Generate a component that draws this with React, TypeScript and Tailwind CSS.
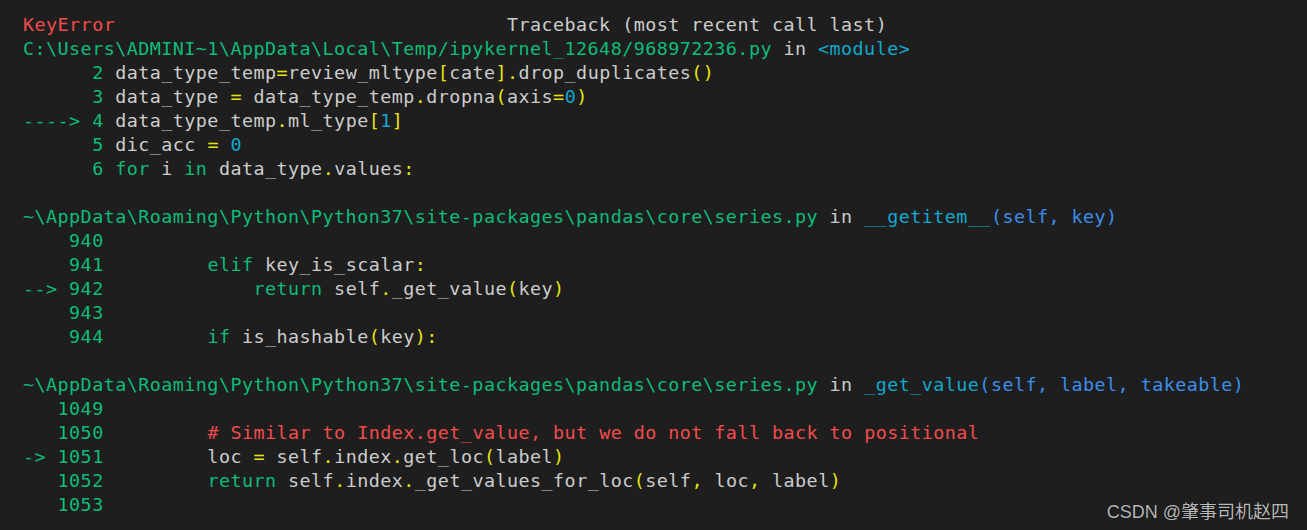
type Seg = [string, string];

const G = 'text-[#0dbc79]';
const W = 'text-[#cccccc]';
const Y = 'text-[#e5e510]';
const C = 'text-[#11a8cd]';
const B = 'text-[#3b8eea]';
const R = 'text-[#f14c4c]';

const IND = '        ';

const lines: Seg[][] = [
  [[R, 'KeyError'], [W, ' '.repeat(34) + 'Traceback (most recent call last)']],
  [[G, 'C:\\Users\\ADMINI~1\\AppData\\Local\\Temp/ipykernel_12648/968972236.py'], [W, ' in '], [C, '<module>']],
  [[G, '      2 '], [W, 'data_type_temp'], [Y, '='], [W, 'review_mltype'], [Y, '['], [W, 'cate'], [Y, '].'], [W, 'drop_duplicates'], [Y, '()']],
  [[G, '      3 '], [W, 'data_type '], [Y, '='], [W, ' data_type_temp'], [Y, '.'], [W, 'dropna'], [Y, '('], [W, 'axis'], [Y, '='], [C, '0'], [Y, ')']],
  [[G, '----> 4 '], [W, 'data_type_temp'], [Y, '.'], [W, 'ml_type'], [Y, '['], [C, '1'], [Y, ']']],
  [[G, '      5 '], [W, 'dic_acc '], [Y, '='], [W, ' '], [C, '0']],
  [[G, '      6 '], [G, 'for'], [W, ' i '], [G, 'in'], [W, ' data_type'], [Y, '.'], [W, 'values'], [Y, ':']],
  [],
  [[G, '~\\AppData\\Roaming\\Python\\Python37\\site-packages\\pandas\\core\\series.py'], [W, ' in '], [C, '__getitem__'], [B, '(self, key)']],
  [[G, '    940']],
  [[G, '    941 '], [W, IND], [G, 'elif'], [W, ' key_is_scalar'], [Y, ':']],
  [[G, '--> 942 '], [W, IND + '    '], [G, 'return'], [W, ' self'], [Y, '.'], [W, '_get_value'], [Y, '('], [W, 'key'], [Y, ')']],
  [[G, '    943']],
  [[G, '    944 '], [W, IND], [G, 'if'], [W, ' is_hashable'], [Y, '('], [W, 'key'], [Y, '):']],
  [],
  [[G, '~\\AppData\\Roaming\\Python\\Python37\\site-packages\\pandas\\core\\series.py'], [W, ' in '], [C, '_get_value'], [B, '(self, label, takeable)']],
  [[G, '   1049']],
  [[G, '   1050 '], [W, IND], [R, '# Similar to Index.get_value, but we do not fall back to positional']],
  [[G, '-> 1051 '], [W, IND + 'loc '], [Y, '='], [W, ' self'], [Y, '.'], [W, 'index'], [Y, '.'], [W, 'get_loc'], [Y, '('], [W, 'label'], [Y, ')']],
  [[G, '   1052 '], [W, IND], [G, 'return'], [W, ' self'], [Y, '.'], [W, 'index'], [Y, '.'], [W, '_get_values_for_loc'], [Y, '('], [W, 'self'], [Y, ','], [W, ' loc'], [Y, ','], [W, ' label'], [Y, ')']],
  [[G, '   1053']],
];

export default function App() {
  return (
    <div className="relative h-[530px] w-full overflow-hidden bg-[#1e1e1e] pl-[23px] pt-[13px]">
      <pre className="m-0 font-['DejaVu_Sans_Mono',monospace] text-[18.4px] leading-[24px] tracking-[0.45px] whitespace-pre">
        {lines.map((line, i) => (
          <div key={i} className="h-[24px]">
            {line.map(([cls, text], j) => (
              <span key={j} className={cls}>
                {text}
              </span>
            ))}
          </div>
        ))}
      </pre>
      <div className="absolute bottom-[9px] right-[18px] font-['Liberation_Sans','Noto_Sans_CJK_SC',sans-serif] text-[18px] leading-none text-[#b8b8b8] [text-shadow:0_0_1px_#000]">
        CSDN @肇事司机赵四
      </div>
    </div>
  );
}
